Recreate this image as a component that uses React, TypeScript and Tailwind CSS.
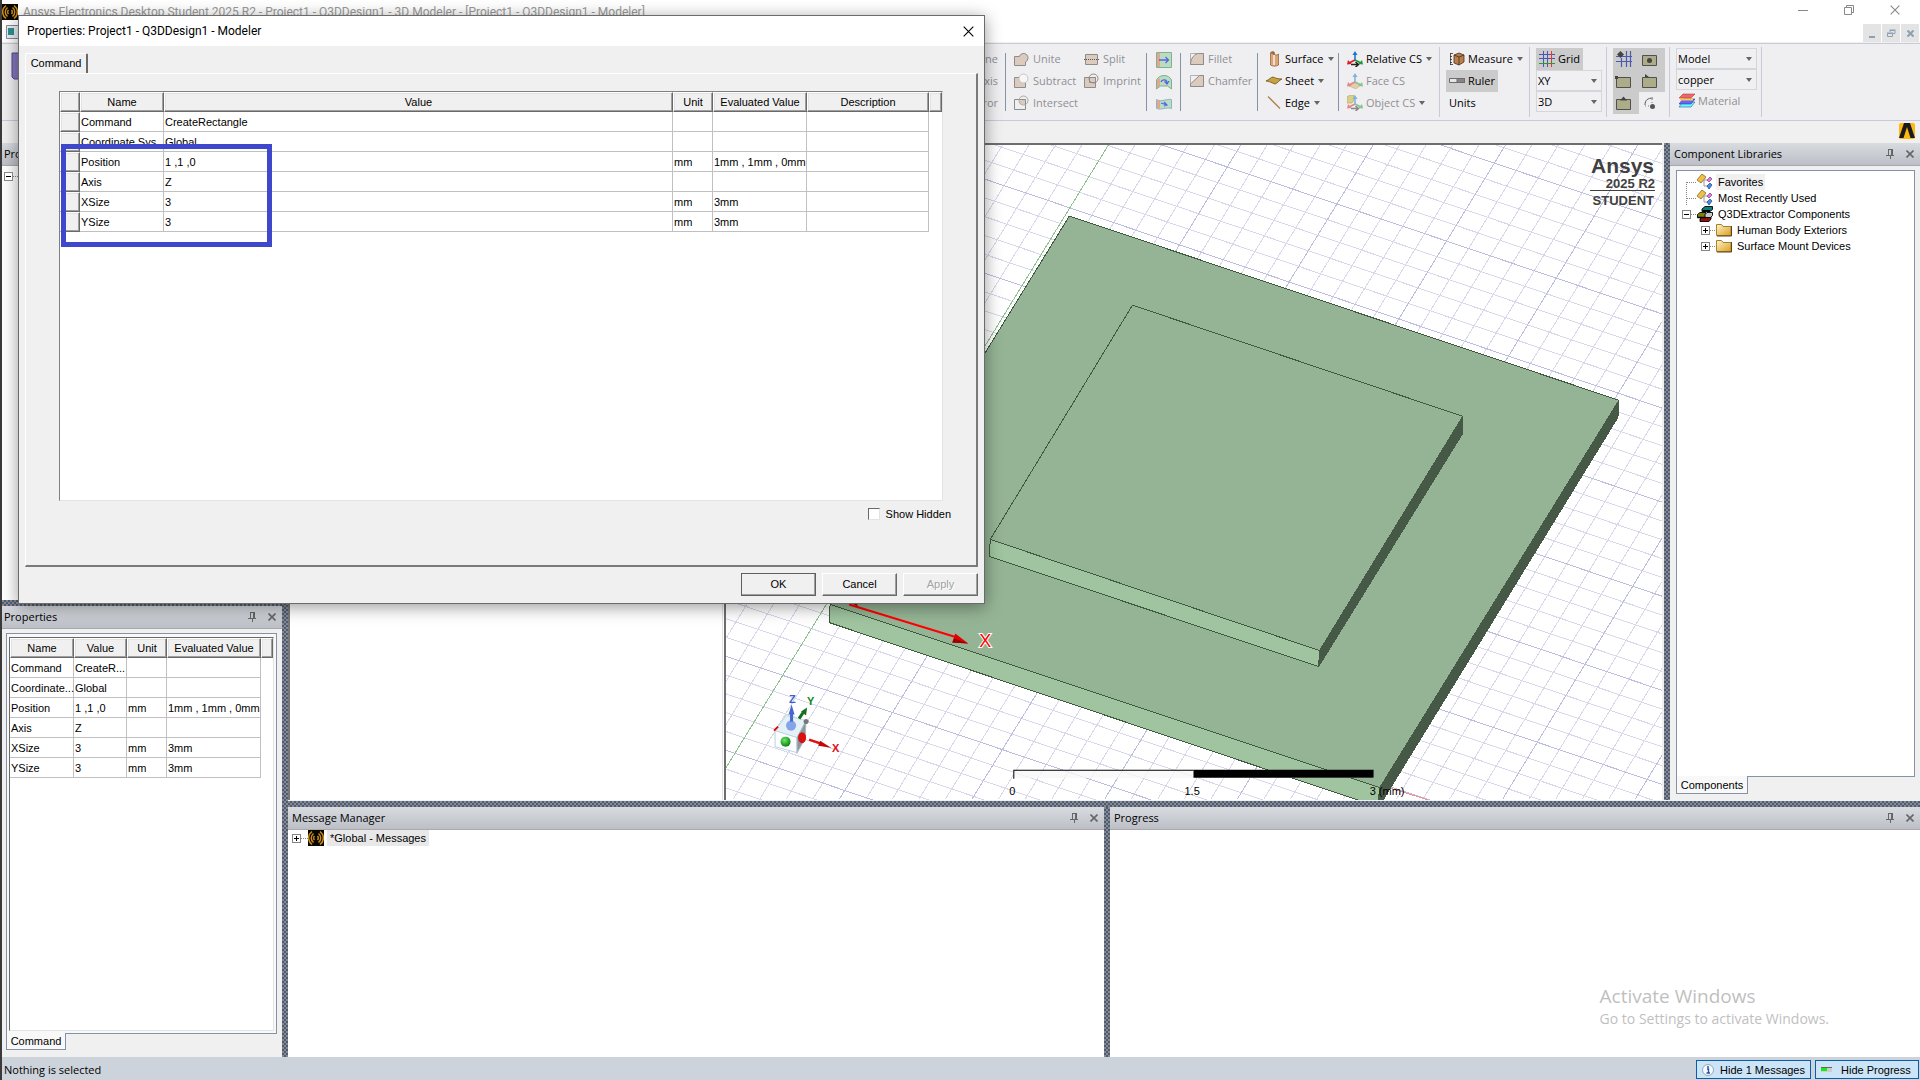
import React from "react";

const DOTS =
  "bg-[repeating-conic-gradient(#4a5b80_0_25%,#8b8a84_0_50%)] bg-[length:4px_4px] shrink-0";

type Row = [string, string, string, string];

const rows: Row[] = [
  ["Command", "CreateRectangle", "", ""],
  ["Coordinate Sys...", "Global", "", ""],
  ["Position", "1 ,1 ,0", "mm", "1mm , 1mm , 0mm"],
  ["Axis", "Z", "", ""],
  ["XSize", "3", "mm", "3mm"],
  ["YSize", "3", "mm", "3mm"],
];

const shortRows: Row[] = [
  ["Command", "CreateR...", "", ""],
  ["Coordinate...", "Global", "", ""],
  ...rows.slice(2),
];

const TH =
  "h-5 p-0 font-normal text-center whitespace-nowrap bg-[#f0f0f0] border-t border-l border-t-white border-l-white border-r border-b border-r-[#696969] border-b-[#696969] shadow-[inset_-1px_-1px_#a0a0a0,inset_1px_1px_#e3e3e3]";
const TD = "h-5 p-0 pl-px border-r border-b border-[#c0c0c0] whitespace-nowrap";
const SMALL = "font-['Liberation_Sans',sans-serif] text-[11px] leading-4";

function Pin() {
  return (
    <svg width="9" height="10" viewBox="0 0 9 10" fill="none" stroke="#666" shapeRendering="crispEdges">
      <path d="M2.5 0v6M6.5 0v6M5.5 0v6M2 .5h5M0 6.5h8M4.5 6v4" />
    </svg>
  );
}

function Cross({ size = 8, color = "#666", w = 2 }: { size?: number; color?: string; w?: number }) {
  return (
    <svg width={size} height={size} viewBox="0 0 8 8" stroke={color} strokeWidth={w}>
      <path d="M.5.5l7 7M7.5.5l-7 7" />
    </svg>
  );
}

function PanelHeader({ title, tight }: { title: string; tight?: boolean }) {
  return (
    <div
      className={
        "flex h-[23px] shrink-0 items-center border-b border-[#a9a9ad] bg-linear-to-b from-[#d8dbe0] to-[#bcc0c6] pr-[6px] " +
        (tight ? "pl-[2px]" : "pl-1")
      }
    >
      <h2 className="flex-1 whitespace-nowrap text-[11px]">{title}</h2>
      <button aria-label="Auto hide" className="mr-[11px]">
        <Pin />
      </button>
      <button aria-label="Close panel">
        <Cross w={1.6} />
      </button>
    </div>
  );
}

function Expander({ open = false }: { open?: boolean }) {
  return (
    <button aria-label="Toggle" className="relative z-10 shrink-0">
      <svg width="9" height="9" viewBox="0 0 9 9" shapeRendering="crispEdges" className="block">
        <rect x=".5" y=".5" width="8" height="8" fill="#fff" stroke="#848484" />
        <path d={open ? "M2 4.5h5" : "M2 4.5h5M4.5 2v5"} stroke="#000" />
      </svg>
    </button>
  );
}

function AnsysDisc({ size = 16 }: { size?: number }) {
  return (
    <svg width={size} height={size} viewBox="0 0 16 16" className="shrink-0" fill="none" stroke="#c98d1b">
      <rect width="16" height="16" fill="#0a0600" stroke="none" />
      <path
        d="M4 1.500C-.500 5-.500 11 4 14.500M5.500 3.500C2.500 6 2.500 10 5.500 12.500M6.500 6c-1 1-1 3 0 4M12 1.500c4.500 3.500 4.500 9.500 0 13M10.500 3.500c3 2.500 3 6.500 0 9M9.500 6c1 1 1 3 0 4"
        strokeWidth="1.500"
      />
    </svg>
  );
}

/* ---------- ribbon icons ---------- */

const S = "#8c8c8c";
const F = "#dccbbd";

const icons: Record<string, React.ReactNode> = {
  unite: <path d="M.500 5.500h5V5a4.500 4.500 0 1 1 6 6v3.500H.500z" fill={F} stroke={S} />,
  subtract: (
    <g stroke={S}>
      <path d="M.500 4.500h9v4h2v6H.500z" fill={F} />
      <circle cx="9.500" cy="5.500" r="4.500" fill="#f6f6f8" stroke="#c6c6c6" />
    </g>
  ),
  intersect: (
    <g stroke={S} fill="none">
      <path d="M5.500 4.500h6v5h-6z" fill={F} stroke="none" />
      <path d="M.500 4.500h11v10H.500z" />
      <circle cx="9.500" cy="5.500" r="4.500" stroke="#a8a8a8" />
    </g>
  ),
  split: (
    <g stroke={S}>
      <path d="M1.500 3.500h12v10h-12z" fill={F} />
      <path d="M0 8.500h16" strokeDasharray="1 1" stroke="#555" />
    </g>
  ),
  imprint: (
    <g stroke={S} fill="none">
      <path d="M.500 4.500h11v10H.500z" fill={F} />
      <path d="M5.500 4.500h6v5h-6z" />
      <circle cx="9.500" cy="5.500" r="4.500" />
    </g>
  ),
  fillet: (
    <g>
      <path d="M1.500 2.500h13v11h-13z" fill="#f0f0f0" stroke="#b0b0b8" />
      <path d="M1.500 13.500c0-7 5-11 8-11h5v11z" fill={F} stroke={S} />
    </g>
  ),
  chamfer: (
    <g>
      <path d="M1.500 2.500h13v11h-13z" fill="#f0f0f0" stroke="#b0b0b8" />
      <path d="M1.500 13.500V11l9-8.500h4v11z" fill={F} stroke={S} />
    </g>
  ),
  surface: (
    <g stroke="#8a5a30" strokeWidth=".7">
      <path d="M4.500 2v12c2 1.500 6 1.500 8 0V3c-2 1.500-3 1-4 .5L8 1z" fill="#d9a679" />
      <path d="M7 4v10h2V4z" fill="#f5dcc2" stroke="none" />
      <path d="M4.500 2C5 .5 7 .5 8 1v3" fill="#a87044" />
    </g>
  ),
  sheet: <path d="M0 8c3-1 5-4 7-4 2 1 5 2 9 2-3 1-5 5-7 5C6 10 3 8 0 8z" fill="#c9a240" stroke="#6b4e14" strokeWidth=".8" />,
  edge: <path d="M2 1.500l12 12" stroke="#b08050" strokeWidth="1.300" />,
  measure: (
    <g strokeWidth=".8">
      <path d="M5 4l5-2 5 2v7l-5 3-5-2z" fill="#b97f4c" stroke="#4a3018" />
      <path d="M5 4l5 2v8M10 6l5-2" fill="none" stroke="#4a3018" />
      <path d="M1.500 2v12M1 2.500h3M1 5.500h2M1 8.500h2M1 11.500h2M1 13.500h3" fill="none" stroke="#333" />
    </g>
  ),
  ruler: (
    <g stroke="#6c6c6c">
      <path d="M.500 5.500h15v4H.500z" fill="#e6e6e6" />
      <path d="M8 5.500h7.500v4H8z" fill="#858585" />
    </g>
  ),
  grid: (
    <g shapeRendering="crispEdges">
      <path d="M4.500 0v16M8.500 0v16M0 3.500h16M0 7.500h16" stroke="#4a55b5" />
      <path d="M12.500 0v16" stroke="#e33" />
      <path d="M0 12.500h16" stroke="#2a9a2a" />
    </g>
  ),
  material: (
    <g strokeWidth=".6">
      <path d="M4 9h12l-4 5H0z" fill="#6ff" stroke="#359" />
      <path d="M4 6h12l-4 5H0z" fill="#66f" stroke="#33a" />
      <path d="M1 6.500h13" stroke="#fc3" strokeWidth="2" />
      <path d="M4 1h12l-4 4H0z" fill="#e66" stroke="#a44" />
    </g>
  ),
};

function csIcon(extra: React.ReactNode, faded: boolean) {
  return (
    <g opacity={faded ? 0.5 : 1}>
      {extra}
      <path d="M8 9V2" stroke="#1478d4" strokeWidth="1.600" />
      <path d="M5.500 4L8 0l2.500 4z" fill="#1478d4" />
      <path d="M8 9l-6 3" stroke="#e01b24" strokeWidth="1.600" />
      <path d="M0 13.500l1-4.500 3.500 4z" fill="#e01b24" />
      <path d="M8 9l6 3" stroke="#1f9a35" strokeWidth="1.600" />
      <path d="M16 13.500L15 9l-3.500 4z" fill="#1f9a35" />
    </g>
  );
}
icons.relative = csIcon(<path d="M4 13.500h7M8.500 11l3 2.500-3 2.500" stroke="#222" fill="none" strokeWidth="1.500" />, false);
icons.face = csIcon(<path d="M2 13l5-4 7 3-5 4z" fill="#d8ab5c" stroke="#a77b2c" strokeWidth=".6" />, true);
icons.object = csIcon(
  <g>
    <path d="M0 2l3-2h4v5L5 8H0z" fill="#c3b315" stroke="#6a6210" strokeWidth=".7" />
    <path d="M4 13.500h7M8.500 11l3 2.500-3 2.500" stroke="#222" fill="none" strokeWidth="1.500" />
  </g>,
  true
);

function Icon({ name }: { name: string }) {
  return (
    <svg width="16" height="16" viewBox="0 0 16 16" fill="none" className="shrink-0">
      {icons[name]}
    </svg>
  );
}

function Tool({ icon, label, off, menu, pressed }: { icon?: string; label: string; off?: boolean; menu?: boolean; pressed?: boolean }) {
  return (
    <button
      disabled={off}
      className={
        "flex h-[22px] items-center gap-[3px] whitespace-nowrap px-[3px] text-[11px] " +
        (off ? "text-[#8f8f93] " : "text-black ") +
        (pressed ? "bg-[#cbcbcb]" : "")
      }
    >
      {icon && <Icon name={icon} />}
      {label}
      {menu && <span className="ml-px border-x-[3px] border-t-4 border-x-transparent border-t-[#666]" />}
    </button>
  );
}

function Sep() {
  return <div className="my-2 w-px shrink-0 bg-[#8593a8]" />;
}
function GroupSep() {
  return <div className="my-[2px] w-px shrink-0 bg-[#c9c9da]" />;
}

function Combo({ label, value, wide }: { label: string; value: string; wide?: boolean }) {
  return (
    <div className={"relative h-[21px] border border-[#d5d5de] bg-[#f0f0f3] " + (wide ? "w-[81px]" : "w-[66px]")}>
      <select aria-label={label} className="h-full w-full appearance-none bg-transparent pl-px text-[11px] outline-none">
        <option>{value}</option>
      </select>
      <span className="pointer-events-none absolute right-1 top-2 border-x-[3px] border-t-4 border-x-transparent border-t-[#666]" />
    </div>
  );
}

function Snap({ label, pressed, children }: { label: string; pressed?: boolean; children: React.ReactNode }) {
  return (
    <button aria-label={label} className={"flex h-[22px] w-[26px] items-center pl-[2px] " + (pressed ? "bg-[#cbcbcb]" : "")}>
      <svg width="18" height="18" viewBox="0 0 18 18" fill="none">
        {children}
      </svg>
    </button>
  );
}

const box = <path d="M1.500 5.500h14v10h-14z" fill="#acac88" stroke="#505050" />;

function Ribbon() {
  return (
    <div className="mt-px flex h-[78px] shrink-0 overflow-hidden border-y border-[#c9c9da] bg-[#efeff2] py-px">
      <div className="flex w-[1003px] shrink-0 justify-between pt-[3px]">
        <button className="ml-[9px] flex w-12 flex-col items-center text-[11px]">
          <svg width="48" height="28" viewBox="0 0 48 28" className="mt-1">
            <path d="M1 1h46v26H3l-2-2z" fill="#8677c0" stroke="#54478c" />
            <path d="M12 1h24v11H12z" fill="#eee" />
          </svg>
          Save
        </button>
        <div className="mr-1 flex flex-col items-end">
          <Tool off label="Along Line" />
          <Tool off label="Around Axis" />
          <Tool off label="Thru Mirror" />
        </div>
      </div>
      <Sep />
      <div className="flex w-[140px] shrink-0 pl-[5px] pt-[3px]">
        <div className="w-[70px]">
          <Tool off icon="unite" label="Unite" />
          <Tool off icon="subtract" label="Subtract" />
          <Tool off icon="intersect" label="Intersect" />
        </div>
        <div>
          <Tool off icon="split" label="Split" />
          <Tool off icon="imprint" label="Imprint" />
        </div>
      </div>
      <Sep />
      <div className="flex w-[33px] shrink-0 flex-col items-center pt-1">
        <button aria-label="Sweep along vector" className="h-[22px]">
          <svg width="16" height="16" viewBox="0 0 16 16" className="block">
            <path d="M.500.500h15v15H.500z" fill="#bcdcc0" stroke="#7ab292" />
            <path d="M1 1h3v14H1z" fill="#e5a58c" />
            <path d="M3 8h9M9.500 5l3 3-3 3" fill="none" stroke="#5566e0" strokeWidth="1.300" />
          </svg>
        </button>
        <button aria-label="Sweep around axis" className="h-[22px]">
          <svg width="16" height="16" viewBox="0 0 16 16" className="block">
            <path d="M.500 6C3 0 13 0 15.500 6v9l-4-3h-7l-4 3z" fill="#bcdcc0" stroke="#7ab292" />
            <path d="M1 6l3-2v8l-3 2z" fill="#e5a58c" />
            <path d="M5 8c1-3 6-3 6 1M8.500 7.500L11 10l2-3" fill="none" stroke="#5566e0" strokeWidth="1.300" />
          </svg>
        </button>
        <button aria-label="Sweep along path" className="h-[22px]">
          <svg width="16" height="16" viewBox="0 0 16 16" className="block">
            <path d="M.500 3.500c5 3 10-1 15 0v9c-5-2-10 2-15 0z" fill="#bcdcc8" stroke="#86b8c4" />
            <path d="M1 4l3 1v8l-3-1z" fill="#e5a58c" />
            <path d="M5 7l6 2M8 6l3 3-3 1" fill="none" stroke="#5566e0" strokeWidth="1.200" />
          </svg>
        </button>
      </div>
      <Sep />
      <div className="w-[76px] shrink-0 pl-[5px] pt-[3px]">
        <Tool off icon="fillet" label="Fillet" />
        <Tool off icon="chamfer" label="Chamfer" />
      </div>
      <Sep />
      <div className="w-20 shrink-0 pl-[5px] pt-[3px]">
        <Tool menu icon="surface" label="Surface" />
        <Tool menu icon="sheet" label="Sheet" />
        <Tool menu icon="edge" label="Edge" />
      </div>
      <Sep />
      <div className="w-[100px] shrink-0 pl-[5px] pt-[3px]">
        <Tool menu icon="relative" label="Relative CS" />
        <Tool off icon="face" label="Face CS" />
        <Tool off menu icon="object" label="Object CS" />
      </div>
      <GroupSep />
      <div className="w-[89px] shrink-0 pl-[6px] pt-[3px]">
        <Tool menu icon="measure" label="Measure" />
        <Tool pressed icon="ruler" label="Ruler" />
        <Tool label="Units" />
      </div>
      <GroupSep />
      <div className="flex w-[76px] shrink-0 flex-col items-start pl-[6px] pt-[3px]">
        <Tool pressed icon="grid" label="Grid" />
        <Combo label="Drawing plane" value="XY" />
        <Combo label="Movement mode" value="3D" />
      </div>
      <GroupSep />
      <div className="grid w-[62px] shrink-0 grid-cols-[26px_26px] content-start pl-[6px] pt-[3px]">
        <Snap label="Snap to grid" pressed>
          <path d="M1 6.500h16M1 11.500h16M6.500 8v9M11.500 1v16M15.500 1v16" stroke="#4a5bb0" strokeWidth="1.200" />
          <path d="M5.500 1L9 4.500 5.500 8 2 4.500z" fill="#444" />
        </Snap>
        <Snap label="Snap to center" pressed>
          {box}
          <circle cx="8.500" cy="10.500" r="2.500" fill="#444" />
        </Snap>
        <Snap label="Snap to vertex" pressed>
          {box}
          <path d="M0 4h3v3H0z" fill="#444" />
        </Snap>
        <Snap label="Snap to edge" pressed>
          {box}
          <path d="M4 5V2l4 3z" fill="#444" />
        </Snap>
        <Snap label="Snap to face" pressed>
          {box}
          <path d="M5 6.500l3.500-4 3.500 4z" fill="#444" />
        </Snap>
        <Snap label="Snap to arc">
          <path d="M4 11c0-5 3-7 8-7" stroke="#555" />
          <path d="M4 12h7M11 5v7" stroke="#77a" strokeDasharray="1 2" />
          <circle cx="11.500" cy="12.500" r="2.500" fill="#555" />
        </Snap>
      </div>
      <GroupSep />
      <div className="flex w-[91px] shrink-0 flex-col items-start pl-[6px] pt-[3px]">
        <Combo wide label="Model type" value="Model" />
        <Combo wide label="Material name" value="copper" />
        <Tool off icon="material" label="Material" />
      </div>
      <GroupSep />
    </div>
  );
}

/* ---------- 3D scene ---------- */

const SLOPE = 0.338;
const gridA = Array.from({ length: 115 }, (_, i) => i - 65);
const gridB = Array.from({ length: 70 }, (_, i) => i - 32);

function Scene() {
  return (
    <svg viewBox="727 145 935 655" preserveAspectRatio="xMinYMin slice" className="absolute inset-0 h-full w-full" aria-label="3D model view">
      <defs>
        <radialGradient id="gs" cx=".4" cy=".35" r=".7">
          <stop offset="0" stopColor="#6fe86f" />
          <stop offset="1" stopColor="#067a06" />
        </radialGradient>
      </defs>
      <g shapeRendering="crispEdges" strokeWidth="1">
        {[false, true].map((major) => (
          <g key={String(major)} stroke={major ? "#bdbddf" : "#d8d8ea"}>
            {gridA
              .filter((k) => (k % 5 === 0) === major)
              .map((k) => {
                const y = 561 + k * 18.8;
                return <line key={"a" + k} x1={725} y1={y} x2={1662} y2={y + 937 * SLOPE} />;
              })}
            {gridB
              .filter((k) => (k % 5 === 0) === major)
              .map((k) => (
                <line key={"b" + k} x1={1109 + k * 26.44} y1={145} x2={708 + k * 26.5} y2={798} />
              ))}
          </g>
        ))}
        <line x1={1109} y1={145} x2={708} y2={798} stroke="#8fc08f" />
        <line x1={1383} y1={785} x2={1434} y2={801} stroke="#f09090" />
      </g>
      <g stroke="#3f5a3f" strokeWidth="1" shapeRendering="crispEdges">
        <path d="M1070 216L1619 400L1380 787L831 604z" fill="#95b495" />
        <path d="M831 604L1380 787L1378 806L830 622z" fill="#9fc49f" />
        <path d="M1619 400L1618 417L1378 808L1380 787z" fill="#465846" stroke="#465846" />
        <path d="M1133 305L1463 416L1320 650L991 539z" fill="#95b495" />
        <path d="M991 539L1320 650L1319 666L990 556z" fill="#9fc49f" />
        <path d="M1463 416L1463 433L1319 666L1320 650z" fill="#465846" stroke="#465846" />
      </g>
      <path d="M850 604L958 637" stroke="#f00" strokeWidth="2" />
      <path d="M851 602h6l2 4z" fill="#a00" />
      <path d="M956 633l-3 9 16 1z" fill="#e00000" />
      <path d="M953 642l16 1-14-5z" fill="#900" />
      <g fontFamily="'Liberation Sans', sans-serif">
        <text x="980" y="646" fontSize="18" fill="#f00" stroke="#fff" strokeWidth="2" paintOrder="stroke">X</text>
        <g fontSize="11" fontWeight="bold">
          <text x="790" y="702" fill="#3b60d0">Z</text>
          <text x="808" y="704" fill="#12861f">Y</text>
          <text x="833" y="751" fill="#e01010">X</text>
        </g>
        <g fontSize="11">
          <path d="M1014 769h360v8h-360z" fill="#f7f7f7" fillOpacity=".8" shapeRendering="crispEdges" />
          <path d="M1014.500 778v-8.500H1194" fill="none" stroke="#000" />
          <path d="M1194 769h180v8h-180z" fill="#000" />
          <text x="1010" y="794">0</text>
          <text x="1185" y="794">1.5</text>
          <text x="1370" y="794">3 (mm)</text>
        </g>
      </g>
      <path d="M776 730l11-15 20 5-9 17z" fill="#e4f2f7" stroke="#c6dce8" />
      <path d="M776 730l22 7v15l-22-6z" fill="#fbfeff" stroke="#bcd0de" />
      <path d="M798 737l9-17-1 18-8 14z" fill="#8d979b" stroke="#a8b8c0" />
      <path d="M775 730l4-4" stroke="#e00" strokeWidth="2" />
      <circle cx="807" cy="721" r="2.500" fill="#777" />
      <circle cx="792" cy="725" r="5" fill="#86a3ea" />
      <path d="M792.500 721v-11" stroke="#4468cc" strokeWidth="3" />
      <path d="M789.500 714l3-10 3 10z" fill="#4468cc" />
      <circle cx="786.500" cy="741" r="5" fill="url(#gs)" />
      <ellipse cx="803" cy="737" rx="4" ry="5.500" fill="#d81010" />
      <path d="M800 718l4-6" stroke="#12701c" strokeWidth="3" />
      <path d="M802 711l6-4-1 8z" fill="#12701c" />
      <path d="M810 739l12 4" stroke="#e01010" strokeWidth="2.500" />
      <path d="M821 740l11 7-13-2z" fill="#c00808" />
    </svg>
  );
}

function Viewport() {
  return (
    <div className="relative min-w-0 flex-1 overflow-hidden border-l-2 border-t-2 border-[#6e6e6e] bg-white">
      <Scene />
      <div className="absolute right-[7px] top-[10px] flex flex-col items-end font-['Liberation_Sans',sans-serif] font-bold text-[#404040]">
        <div className="px-px text-[21px] leading-[22px]">Ansys</div>
        <div className="w-full border-b border-[#404040] text-right text-[13px] leading-[13px]">2025 R2</div>
        <div className="px-px pt-[2px] text-[13px] leading-4">STUDENT</div>
      </div>
    </div>
  );
}

/* ---------- panels ---------- */

function FavIcon() {
  return (
    <svg width="16" height="16" viewBox="0 0 16 16" className="shrink-0">
      <path d="M7 6v6h5M7 6h4" fill="none" stroke="#99a" />
      <path d="M0 6l5-6 4 3-5 6z" fill="#eec04a" stroke="#8a6a1c" strokeWidth=".8" />
      <path d="M10 6l3-3 2 2-3 3z" fill="#e27be0" stroke="#934a93" strokeWidth=".8" />
      <path d="M10 12l3-3 2 2-3 4z" fill="#4a8be0" stroke="#2a559a" strokeWidth=".8" />
    </svg>
  );
}

function BooksIcon() {
  return (
    <svg width="16" height="16" viewBox="0 0 16 16" className="shrink-0" stroke="#000" strokeWidth=".9">
      <path d="M5 3l3-2.500h7.500v3L13 5.500H5z" fill="#0c8080" />
      <path d="M3 13l2-2h9v2l-2 2.500H3z" fill="#901010" />
      <path d="M.500 8.500L3 6.500h6v5H.500z" fill="#7f7f10" />
      <path d="M8 8.500l2-2h5.500v3l-2 2H8z" fill="#c8c8c8" />
      <path d="M5.500 4.800h7.500M.500 11.500h8" strokeWidth="1.500" />
    </svg>
  );
}

function FolderIcon() {
  return (
    <svg width="16" height="14" viewBox="0 0 16 14" className="shrink-0">
      <defs>
        <linearGradient id="fold" x1="0" y1="0" x2="1" y2="1">
          <stop offset="0" stopColor="#fff4c8" />
          <stop offset="1" stopColor="#dd9f22" />
        </linearGradient>
      </defs>
      <path d="M.500 12.500v-11h5l1.500 2h8v9z" fill="url(#fold)" stroke="#a5802f" />
      <path d="M15.500 3v10H1" fill="none" stroke="#5b4514" />
    </svg>
  );
}

const LEAD = "h-px shrink-0 bg-[repeating-linear-gradient(90deg,#888_0_1px,transparent_1px_2px)]";

function ComponentLibraries() {
  return (
    <section className="flex w-[250px] shrink-0 flex-col bg-[#f0f0f0]">
      <PanelHeader title="Component Libraries" />
      <div className="ml-[6px] mr-[5px] mt-1 flex-1 border border-[#8492a8] bg-white px-[5px] pt-[3px]">
        <ul className={SMALL}>
          <li className="flex h-4 items-center">
            <span className="ml-1 h-4 w-px self-end bg-[repeating-linear-gradient(#888_0_1px,transparent_1px_2px)] [clip-path:inset(8px_0_0_0)]" />
            <span className={LEAD + " w-[10px]"} />
            <FavIcon />
            <span className="ml-[3px] bg-[#f0f0f0] px-[2px]">Favorites</span>
          </li>
          <li className="flex h-4 items-center">
            <span className="ml-1 h-4 w-px bg-[repeating-linear-gradient(#888_0_1px,transparent_1px_2px)]" />
            <span className={LEAD + " w-[10px]"} />
            <FavIcon />
            <span className="ml-[3px] px-[2px]">Most Recently Used</span>
          </li>
          <li>
            <div className="flex h-4 items-center">
              <Expander open />
              <span className={LEAD + " w-[6px]"} />
              <BooksIcon />
              <span className="ml-[3px] px-[2px]">Q3DExtractor Components</span>
            </div>
            <ul className="pl-[19px]">
              {["Human Body Exteriors", "Surface Mount Devices"].map((t) => (
                <li key={t} className="flex h-4 items-center">
                  <Expander />
                  <span className={LEAD + " w-[6px]"} />
                  <FolderIcon />
                  <span className="ml-[3px] px-[2px]">{t}</span>
                </li>
              ))}
            </ul>
          </li>
        </ul>
      </div>
      <button className={SMALL + " -mt-px mb-[6px] ml-[6px] h-[18px] w-[72px] border border-t-0 border-[#8492a8] bg-[#f8f8f8]"}>Components</button>
    </section>
  );
}

function PropertiesPanel() {
  return (
    <section className="flex flex-1 flex-col bg-[#f0f0f0]">
      <PanelHeader tight title="Properties" />
      <div className="ml-1 mr-[5px] mt-1 flex flex-1 flex-col border border-[#8492a8] bg-[#f8f8f8] p-[2px] pt-[3px]">
        <div className="flex-1 border-t border-l border-r border-b border-t-[#696969] border-l-[#696969] border-r-[#e3e3e3] border-b-[#e3e3e3] bg-white">
          <table className={SMALL + " w-full table-fixed border-separate border-spacing-0"}>
            <colgroup>
              <col className="w-16" />
              <col className="w-[53px]" />
              <col className="w-10" />
              <col className="w-[94px]" />
              <col />
            </colgroup>
            <thead>
              <tr>
                {["Name", "Value", "Unit", "Evaluated Value", ""].map((h) => (
                  <th key={h} className={TH}>{h}</th>
                ))}
              </tr>
            </thead>
            <tbody>
              {shortRows.map((r) => (
                <tr key={r[0]}>
                  {r.map((c, i) => (
                    <td key={i} className={TD}>{c}</td>
                  ))}
                  <td />
                </tr>
              ))}
            </tbody>
          </table>
        </div>
      </div>
      <button className={SMALL + " -mt-px mb-[7px] ml-1 h-[17px] w-[60px] border border-t-0 border-[#8492a8] bg-[#f8f8f8]"}>Command</button>
    </section>
  );
}

/* ---------- dialog ---------- */

const BTN =
  "h-[23px] border border-white border-r-[#696969] border-b-[#696969] bg-[#f0f0f0] pb-px shadow-[inset_-1px_-1px_#a0a0a0]";

function PropertiesDialog() {
  return (
    <div
      role="dialog"
      aria-label="Properties"
      className="absolute left-4 top-[15px] flex h-[589px] w-[967px] flex-col border border-[#6b6b6b] bg-[#f0f0f0] shadow-[0_3px_16px_rgba(0,0,0,0.4)]"
    >
      <div className="flex h-[30px] shrink-0 items-center bg-white pl-2 pr-[10px]">
        <h1 className="flex-1 font-['Roboto',sans-serif] text-[12px]">Properties: Project1 - Q3DDesign1 - Modeler</h1>
        <button aria-label="Close dialog">
          <Cross size={11} color="#000" w={0.8} />
        </button>
      </div>
      <div className={SMALL + " flex flex-1 flex-col px-[6px] pb-[7px] pt-[7px]"}>
        <button className="relative z-10 h-5 w-[63px] shrink-0 rounded-t-[2px] border border-b-0 border-white border-r-2 border-r-[#696969] bg-[#f0f0f0] pb-[2px]">
          Command
        </button>
        <div className="flex flex-1 flex-col border border-white border-r-2 border-b-2 border-r-[#7a7a7a] border-b-[#7a7a7a] pl-[33px] pr-[33px] pt-[17px]">
          <div className="h-[410px] border border-t-[#808080] border-l-[#808080] border-r-[#e3e3e3] border-b-[#e3e3e3] bg-white">
            <table className="w-full table-fixed border-separate border-spacing-0">
              <colgroup>
                <col className="w-5" />
                <col className="w-[84px]" />
                <col />
                <col className="w-10" />
                <col className="w-[94px]" />
                <col className="w-[122px]" />
                <col className="w-[13px]" />
              </colgroup>
              <thead>
                <tr>
                  {["", "Name", "Value", "Unit", "Evaluated Value", "Description", ""].map((h, i) => (
                    <th key={i} className={TH}>{h}</th>
                  ))}
                </tr>
              </thead>
              <tbody>
                {rows.map((r) => (
                  <tr key={r[0]}>
                    <th className={TH} />
                    {r.map((c, i) => (
                      <td key={i} className={TD}>{c}</td>
                    ))}
                    <td className={TD} />
                    <td />
                  </tr>
                ))}
              </tbody>
            </table>
          </div>
          <label className="mr-[-8px] mt-[5px] flex items-center gap-[6px] self-end">
            <input type="checkbox" className="h-3 w-3 appearance-none border border-t-[#696969] border-l-[#696969] border-r-[#e3e3e3] border-b-[#e3e3e3] bg-white" />
            Show Hidden
          </label>
        </div>
        <div className="mt-[6px] flex justify-end gap-[6px]">
          <button className={BTN + " w-[75px] outline outline-[#606060] -outline-offset-1"}>OK</button>
          <button className={BTN + " w-[75px]"}>Cancel</button>
          <button disabled className={BTN + " w-[75px] text-[#a0a0a0] [text-shadow:1px_1px_#fff]"}>Apply</button>
        </div>
      </div>
      <div className="pointer-events-none absolute left-[42px] top-[128px] h-[103px] w-[211px] border-[5px] border-[#3f48cc]" />
    </div>
  );
}

export default function App() {
  return (
    <div className="relative flex h-screen w-full flex-col overflow-hidden border-l-2 border-[#3a3a3a] bg-[#f0f0f0] font-['Open_Sans','Noto_Sans',sans-serif] text-[11px] leading-4 text-black">
      <header className="flex h-6 shrink-0 items-center bg-white pr-5">
        <AnsysDisc />
        <span className="ml-[5px] flex-1 whitespace-nowrap font-['Roboto',sans-serif] text-[12px] text-[#999]">
          Ansys Electronics Desktop Student 2025 R2 - Project1 - Q3DDesign1 - 3D Modeler - [Project1 - Q3DDesign1 - Modeler]
        </span>
        <div className="mb-1 flex items-center gap-9">
          <button aria-label="Minimize" className="h-px w-[10px] bg-[#888]" />
          <button aria-label="Restore">
            <svg width="10" height="10" viewBox="0 0 10 10" fill="none" stroke="#888" className="block">
              <path d="M.500 2.500h7v7h-7zM2.500 2.500v-2h7v7h-2" />
            </svg>
          </button>
          <button aria-label="Close">
            <Cross size={10} color="#888" w={0.9} />
          </button>
        </div>
      </header>
      <div className="flex h-[18px] shrink-0 items-stretch justify-between bg-white">
        <svg width="16" height="14" viewBox="0 0 16 14" className="ml-1 mt-px">
          <path d="M.500.500h15v13H.500z" fill="#e8eef4" stroke="#889" />
          <path d="M2 3h6v7H2z" fill="#2f8f8f" />
        </svg>
        <div className="mr-px flex gap-px">
          <button aria-label="Minimize document" className="flex w-[18px] items-center justify-center bg-[#e4e4e4]">
            <span className="mt-[7px] h-[2px] w-[6px] bg-[#8ea0b4]" />
          </button>
          <button aria-label="Restore document" className="flex w-[18px] items-center justify-center bg-[#e4e4e4]">
            <svg width="9" height="9" viewBox="0 0 9 9" fill="none" stroke="#8ea0b4">
              <path d="M.500 4.500h5v3h-5zM0 4h6M3 3V1.500h5v3H6M2.500 1h6" />
            </svg>
          </button>
          <button aria-label="Close document" className="flex w-[18px] items-center justify-center bg-[#e4e4e4]">
            <Cross size={7} color="#8ea0b4" w={2.4} />
          </button>
        </div>
      </div>
      <Ribbon />
      <div className="flex h-[22px] shrink-0 items-center justify-end pr-[5px]">
        <svg width="16" height="16" viewBox="0 0 16 16" className="mb-[2px]">
          <rect width="16" height="16" rx="2" fill="#fdb813" />
          <path d="M0 15L5 0h6l5 15h-4.500L8 4 4.500 15z" fill="#1b1b1b" />
        </svg>
      </div>
      <main className="flex min-h-0 flex-1 bg-white">
        <div className="flex w-[280px] shrink-0 flex-col">
          <section className="h-[457px] shrink-0 bg-white">
            <PanelHeader tight title="Project Manager" />
            <div className="flex items-center gap-0 pl-[2px] pt-[6px]">
              <Expander open />
              <span className={LEAD + " w-[6px]"} />
            </div>
          </section>
          <div className={DOTS + " h-[6px]"} />
          <PropertiesPanel />
        </div>
        <div className={DOTS + " w-[6px]"} />
        <div className="flex min-w-0 flex-1 flex-col">
          <div className="flex min-h-0 flex-1">
            <div className="mr-px w-[435px] shrink-0 border-l-2 border-l-[#777] border-r border-r-[#e3e3e3] bg-white" />
            <Viewport />
            <div className="w-[2px] shrink-0 bg-[#f0f0f0]" />
            <div className={DOTS + " w-[6px]"} />
            <ComponentLibraries />
          </div>
          <div className={DOTS + " box-content h-[6px] border-t border-[#f0f0f0]"} />
          <div className="flex h-[250px] shrink-0">
            <section className="flex min-w-0 flex-1 flex-col bg-white">
              <PanelHeader title="Message Manager" />
              <div className={SMALL + " flex items-center pl-1"}>
                <Expander />
                <span className={LEAD + " w-[7px]"} />
                <AnsysDisc />
                <span className="ml-[3px] bg-[#e8e8e8] px-[3px]">*Global - Messages</span>
              </div>
            </section>
            <div className={DOTS + " w-[6px]"} />
            <section className="flex w-[810px] shrink-0 flex-col bg-white">
              <PanelHeader title="Progress" />
            </section>
          </div>
        </div>
      </main>
      <footer className="flex h-[23px] shrink-0 items-center bg-[#cdd3db] pl-[2px] pr-px">
        <span className="mt-[2px] flex-1">Nothing is selected</span>
        <div className={SMALL + " flex gap-1 whitespace-nowrap"}>
          <button className="mt-[2px] flex h-[19px] w-[115px] items-center gap-[6px] border border-[#0a5ea8] bg-[#cce4f7] pl-[5px]">
            <svg width="12" height="12" viewBox="0 0 12 12" className="shrink-0">
              <circle cx="6" cy="6" r="5.500" fill="#f4f8ff" stroke="#9aa" />
              <path d="M5 5h1.500v4M4.500 9h3.500" stroke="#2050b0" fill="none" strokeWidth="1.300" />
              <circle cx="6" cy="3" r="1" fill="#2050b0" />
            </svg>
            Hide 1 Messages
          </button>
          <button className="mt-[2px] flex h-[19px] w-[104px] items-center gap-[9px] border border-[#0a5ea8] bg-[#cce4f7] pl-[5px]">
            <svg width="11" height="5" viewBox="0 0 11 5" className="shrink-0">
              <path d="M0 0h11v5H0z" fill="#ccc" />
              <path d="M0 1h6v3H0z" fill="#1e1" />
              <path d="M0 .500h11" stroke="#666" />
            </svg>
            Hide Progress
          </button>
        </div>
      </footer>
      <PropertiesDialog />
      <div className="pointer-events-none absolute bottom-[51px] right-[91px] text-[#bfbfbf]">
        <div className="text-[19px] leading-[26px]">Activate Windows</div>
        <div className="text-[14px] leading-5">Go to Settings to activate Windows.</div>
      </div>
    </div>
  );
}
